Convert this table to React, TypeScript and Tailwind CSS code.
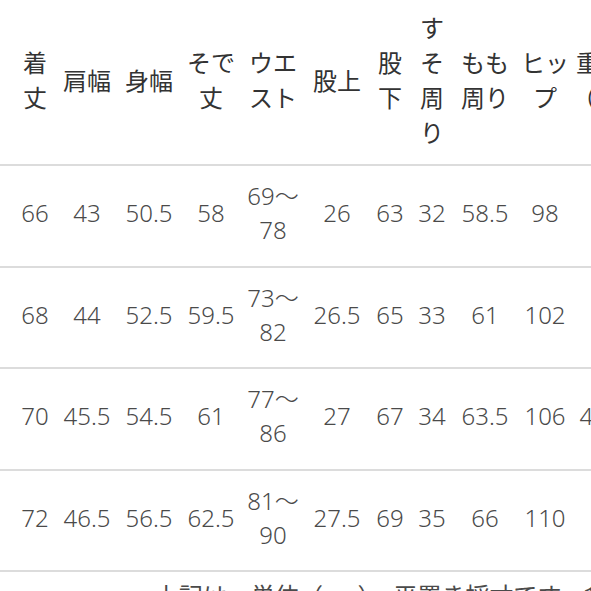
import React from 'react';

// size chart, cropped on both sides like the source screenshot
const headers: React.ReactNode[] = [
  <>着<br />丈</>,
  '肩幅',
  '身幅',
  <>そで<br />丈</>,
  <>ウエ<br />スト</>,
  '股上',
  <>股<br />下</>,
  <>す<br />そ<br />周<br />り</>,
  <>もも<br />周り</>,
  <>ヒッ<br />プ</>,
  <>重量<br />（g）</>,
];

const data: string[][] = [
  ['66', '43', '50.5', '58', '69～|78', '26', '63', '32', '58.5', '98', ''],
  ['68', '44', '52.5', '59.5', '73～|82', '26.5', '65', '33', '61', '102', ''],
  ['70', '45.5', '54.5', '61', '77～|86', '27', '67', '34', '63.5', '106', '410'],
  ['72', '46.5', '56.5', '62.5', '81～|90', '27.5', '69', '35', '66', '110', ''],
];

const widths = [12, 46, 58, 66, 58, 66, 62, 44, 40, 66, 54, 56];

const cjk = { fontFamily: '"Noto Sans CJK JP", "Noto Sans", sans-serif' };
const num = { fontFamily: '"Noto Sans", "Noto Sans CJK JP", sans-serif' };

export default function App() {
  return (
    <div className="w-[591px] h-[591px] overflow-hidden bg-white">
      <table className="table-fixed border-separate border-spacing-0 w-[628px]">
        <colgroup>
          {widths.map((w, i) => (
            <col key={i} style={{ width: w }} />
          ))}
        </colgroup>
        <thead>
          <tr className="h-[166px]">
            <th className="border-b-2 border-[#dcdcdc]" />
            {headers.map((h, i) => (
              <th
                key={i}
                style={cjk}
                className="border-b-2 border-[#dcdcdc] pb-[6px] text-center align-middle text-[24px] leading-[35px] font-normal text-[#333] whitespace-nowrap"
              >
                {h}
              </th>
            ))}
          </tr>
        </thead>
        <tbody>
          {data.map((r, ri) => (
            <tr key={ri} className="h-[101.5px]">
              <td className="border-b-2 border-[#dcdcdc]" />
              {r.map((v, ci) => {
                const parts = v.split('|');
                return (
                  <td
                    key={ci}
                    style={num}
                    className="border-b-2 border-[#dcdcdc] pb-[5px] text-center align-middle text-[24px] leading-[34px] font-light text-[#4a4a4a] whitespace-nowrap"
                  >
                    {parts.length > 1 ? (
                      <>
                        {parts[0]}
                        <br />
                        {parts[1]}
                      </>
                    ) : (
                      v
                    )}
                  </td>
                );
              })}
            </tr>
          ))}
          <tr>
            <td
              colSpan={12}
              style={cjk}
              className="pt-[6px] pl-[155px] text-left text-[24px] leading-[34px] text-[#4a4a4a] whitespace-nowrap"
            >
              上記は、単位（cm）、平置き採寸です。多少の誤差はご了承ください。
            </td>
          </tr>
        </tbody>
      </table>
    </div>
  );
}
